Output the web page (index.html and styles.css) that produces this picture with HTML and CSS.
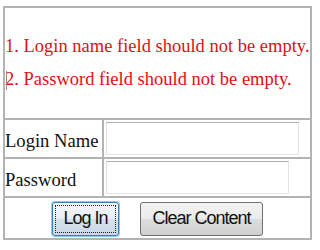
FILE: index.html
```html
<!DOCTYPE html>
<html>
<head>
    <title>Login</title>
    <meta charset="utf-8">
    <link rel="stylesheet" href="styles.css">
</head>
<body>
    <form class="login-form">
        <table class="login-table">
            <colgroup>
                <col class="col-label">
                <col class="col-field">
            </colgroup>
            <tr>
                <td colspan="2" class="messages">
                    <div class="error-line">1. Login name field should not be empty.</div>
                    <div class="error-line"><span class="caret"></span>2. Password field should not be empty.</div>
                </td>
            </tr>
            <tr class="field-row">
                <td class="label">Login Name</td>
                <td class="field"><input type="text" class="input-name"></td>
            </tr>
            <tr class="field-row">
                <td class="label">Password</td>
                <td class="field"><input type="password" class="input-pass"></td>
            </tr>
            <tr>
                <td colspan="2" class="actions">
                    <div class="buttons">
                        <button type="button" class="btn btn-focus">Log In</button>
                        <button type="reset" class="btn btn-clear">Clear Content</button>
                    </div>
                </td>
            </tr>
        </table>
    </form>
</body>
</html>
```

FILE: styles.css
```css
body {
    margin: 0;
    padding: 6px 0 0 3px;
    background: #ffffff;
    font-family: "Liberation Serif", "Times New Roman", serif;
}

.login-table {
    width: 309px;
    border-collapse: collapse;
    table-layout: fixed;
}

.col-label {
    width: 99px;
}

.login-table td {
    border: 2px solid #b3b3b3;
    padding: 0;
}

.messages {
    height: 110px;
    color: #dd1111;
    font-size: 18.5px;
}

.error-line {
    position: relative;
    line-height: 33px;
    white-space: nowrap;
}

.caret {
    position: absolute;
    left: 1px;
    top: 8px;
    height: 19px;
    border-left: 1px solid #b08080;
}

.field-row td {
    height: 37px;
}

.login-table .label {
    height: 33px;
    padding-top: 4px;
    font-size: 18.6px;
    color: #111;
    white-space: nowrap;
}

.login-table .field {
    padding-left: 2px;
}

.field input {
    display: block;
    height: 33px;
    box-sizing: border-box;
    border: 1px solid #e2e6ec;
    border-top-color: #abadb3;
    border-left-color: #dbdfe6;
    background: #fff;
    margin: 0;
}

.input-name {
    width: 193px;
}

.input-pass {
    width: 183px;
}

.actions {
    height: 40px;
}

.buttons {
    display: flex;
    justify-content: center;
    gap: 21px;
    padding-top: 1px;
}

.btn {
    height: 34px;
    padding: 0;
    border: 1px solid #707070;
    border-radius: 3px;
    background: linear-gradient(#f2f2f2 0%, #ebebeb 50%, #dddddd 51%, #cfcfcf 100%);
    font-family: "Liberation Sans", Arial, sans-serif;
    font-size: 18px;
    letter-spacing: -1px;
    color: #111;
    white-space: nowrap;
}

.btn-focus {
    width: 67px;
    border-color: #3c7fb1;
    box-shadow: 0 0 0 1px #8ccbee;
    background: linear-gradient(#f2f7fb 0%, #e6eef5 50%, #d5e2ec 51%, #c8d7e4 100%);
    outline: 1px dotted #222;
    outline-offset: -4px;
}

.btn-clear {
    width: 123px;
}
```
